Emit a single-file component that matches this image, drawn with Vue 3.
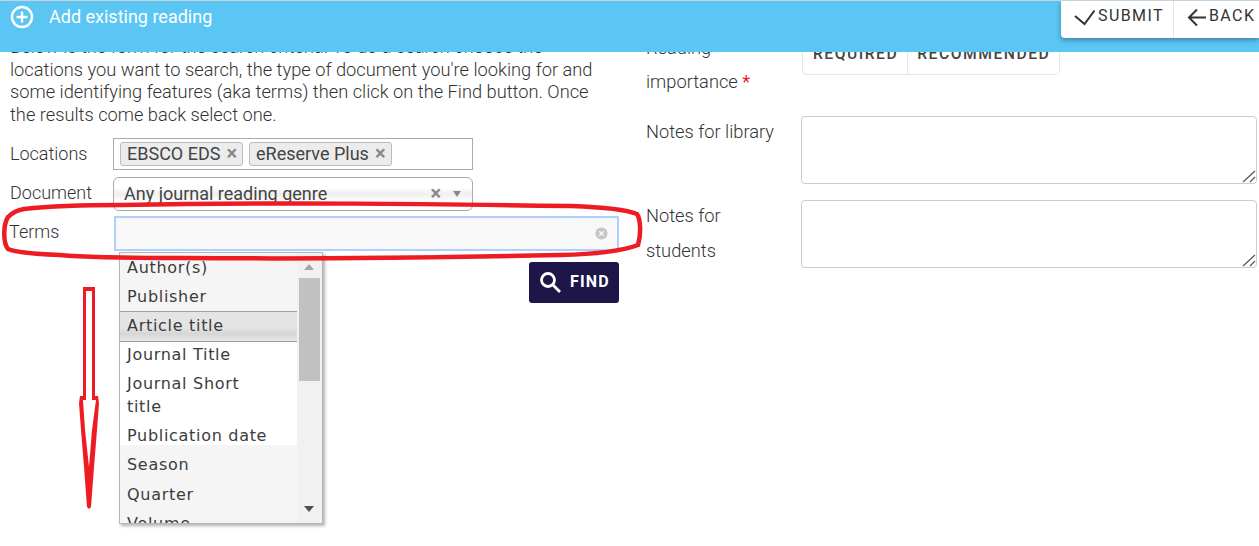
<template>
  <div class="page">
    <header class="topbar">
      <div class="title">
        <svg class="plus" width="24" height="24" viewBox="0 0 24 24" fill="none" stroke="#fff" stroke-width="2.4">
          <circle cx="12" cy="12" r="10" />
          <path d="M12 6.5v11M6.5 12h11" />
        </svg>
        <span>Add existing reading</span>
      </div>
      <div class="actions">
        <button class="action action-submit">
          <svg width="24" height="24" viewBox="0 0 24 24" fill="none" stroke="#333" stroke-width="2">
            <path d="M2 11l9.5 8L21.5 5.5" />
          </svg>
          SUBMIT
        </button>
        <button class="action action-back">
          <svg width="22" height="24" viewBox="0 0 22 24" fill="none" stroke="#333" stroke-width="2">
            <path d="M20 12.5H3M11 4.5l-8 8 8 8" />
          </svg>
          BACK
        </button>
      </div>
    </header>

    <section class="left">
      <p class="intro">
        Below is the form for the search criteria. To do a search choose the locations you want to search, the type of document you're looking for and some identifying features (aka terms) then click on the Find button. Once the results come back select one.
      </p>

      <div class="row row-locations">
        <label>Locations</label>
        <div class="tags">
          <span v-for="tag in tags" :key="tag" class="tag">{{ tag }}<b class="tag-x">×</b></span>
        </div>
      </div>

      <div class="row row-document">
        <label>Document</label>
        <div class="select">
          <span>Any journal reading genre</span>
          <b class="select-x">×</b>
          <i class="caret"></i>
        </div>
      </div>

      <div class="row row-terms">
        <label>Terms</label>
        <div class="terms">
          <input class="terms-input" type="text" />
          <svg class="clear" width="13" height="13" viewBox="0 0 13 13">
            <circle cx="6.5" cy="6.5" r="6" fill="#c4c4c4" />
            <path d="M4.2 4.2l4.6 4.6M8.8 4.2l-4.6 4.6" stroke="#f7f7f7" stroke-width="1.6" />
          </svg>
          <div class="dropdown">
            <div class="options">
              <div
                v-for="opt in options"
                :key="opt.label"
                class="option"
                :class="opt.kind"
              >{{ opt.label }}</div>
            </div>
            <div class="scrollbar">
              <i class="arrow-up"></i>
              <div class="thumb"></div>
              <i class="arrow-down"></i>
            </div>
          </div>
        </div>
      </div>

      <div class="find-row">
        <button class="find">
          <svg width="24" height="24" viewBox="0 0 24 24" fill="none" stroke="#fff" stroke-width="2.8">
            <circle cx="10" cy="10" r="6.5" />
            <path d="M15 15l7 7" />
          </svg>
          FIND
        </button>
      </div>
    </section>

    <section class="right">
      <div class="field field-importance">
        <label>Reading importance <em>*</em></label>
        <div class="toggle">
          <span>REQUIRED</span>
          <span>RECOMMENDED</span>
        </div>
      </div>
      <div class="field field-library">
        <label>Notes for library</label>
        <div class="note">
          <textarea></textarea>
          <svg class="grip" width="14" height="13" viewBox="0 0 14 13" fill="none" stroke="#555" stroke-width="1.2">
            <path d="M1 12L13 1M8 12l5-5" />
          </svg>
        </div>
      </div>
      <div class="field field-students">
        <label>Notes for students</label>
        <div class="note">
          <textarea></textarea>
          <svg class="grip" width="14" height="13" viewBox="0 0 14 13" fill="none" stroke="#555" stroke-width="1.2">
            <path d="M1 12L13 1M8 12l5-5" />
          </svg>
        </div>
      </div>
    </section>

    <svg class="markup" width="1259" height="546" viewBox="0 0 1259 546">
      <path
        fill="none"
        stroke="#ed1c24"
        stroke-width="4.5"
        d="M24 209C60 205 90 205 122 205C280 202 430 204 571 206C600 207 625 209 637 214C641 220 641 235 638 245C625 250 600 254 560 255C430 258 300 259 180 258C120 258 80 257 60 255C35 254 15 252 8 249C3 243 3 225 8 217C12 213 18 210 24 209Z"
      />
      <path
        fill="#ed1c24"
        fill-rule="evenodd"
        d="M83 287H95V396H98L99 403L97 430L94 467L91 507L89 509L87 507L84 467L81 430L79 403L80 396H83ZM86 291V400H83L85 430L89 467L92 430L96 400H92V291Z"
      />
    </svg>
  </div>
</template>

<script setup>
const tags = ['EBSCO EDS', 'eReserve Plus']

const options = [
  { label: 'Author(s)', kind: 'grey' },
  { label: 'Publisher', kind: 'grey' },
  { label: 'Article title', kind: 'active' },
  { label: 'Journal Title', kind: 'plain' },
  { label: 'Journal Short title', kind: 'plain' },
  { label: 'Publication date', kind: 'plain short' },
  { label: 'Season', kind: 'grey after-short' },
  { label: 'Quarter', kind: 'grey' },
  { label: 'Volume', kind: 'grey' }
]
</script>

<style>
html, body {
  margin: 0;
  background: #fff;
  overflow: hidden;
}
</style>

<style scoped>
.page {
  position: relative;
  width: 1259px;
  height: 546px;
  overflow: hidden;
  display: grid;
  grid-template-columns: 646px 613px;
  font-family: Roboto, "Liberation Sans", sans-serif;
  font-size: 18.25px;
  font-weight: 300;
  color: #333;
  border-top: 1px solid #c8d4da;
  box-sizing: border-box;
}

.topbar {
  position: absolute;
  top: 0;
  left: 0;
  right: 0;
  height: 51px;
  background: #5bc5f4;
  display: flex;
  justify-content: space-between;
  align-items: flex-start;
  z-index: 2;
}

.title {
  display: flex;
  align-items: center;
  gap: 15px;
  padding: 4px 0 0 10px;
  color: #fff;
  font-size: 18px;
  font-weight: 400;
}

.title span {
  padding-bottom: 2px;
}

.actions {
  display: flex;
  height: 37px;
  background: #fff;
  border-bottom-left-radius: 4px;
  box-shadow: 0 2px 5px rgba(0, 0, 0, 0.35);
}

.action {
  display: flex;
  align-items: center;
  gap: 1px;
  padding: 0 0 8px 12px;
  border: 0;
  background: none;
  font-family: inherit;
  font-size: 16px;
  font-weight: 400;
  letter-spacing: 1.4px;
  color: #333;
}

.action svg {
  margin-top: 2px;
}

.action-submit {
  width: 113px;
  border-right: 1px solid #e4e4e4;
}

.action-back {
  width: 85px;
}

.left {
  padding: 35px 26px 0 10px;
}

.intro {
  margin: 0;
  max-width: 600px;
  line-height: 22.6px;
  color: #333;
}

.row {
  display: flex;
  font-size: 18px;
}

.row label {
  width: 103px;
  flex: none;
}

.row-locations {
  margin-top: 11.6px;
  line-height: 31px;
}

.tags {
  width: 360px;
  height: 32px;
  box-sizing: border-box;
  border: 1px solid #aaa;
  display: flex;
  gap: 6px;
  padding: 3px 6px;
}

.tag {
  height: 24px;
  line-height: 21px;
  box-sizing: border-box;
  padding: 0 5px 0 6px;
  border: 1px solid #bbb;
  border-radius: 3px;
  background: #ececec;
  font-weight: 400;
  color: #444;
}

.tag-x,
.select-x {
  margin-left: 6px;
  color: #888;
  font-size: 20px;
  font-weight: 700;
}

.row-document {
  margin-top: 7px;
  line-height: 31px;
}

.select {
  position: relative;
  width: 360px;
  height: 34px;
  box-sizing: border-box;
  border: 1px solid #aaa;
  border-radius: 6px;
  padding: 0 10px;
  display: flex;
  align-items: center;
  font-weight: 400;
  color: #444;
  background: linear-gradient(#fff 30%, #efefef 50%, #fff 75%);
}

.select span {
  flex: 1;
}

.select-x {
  margin-right: 12px;
}

.caret {
  width: 0;
  height: 0;
  border: 4px solid transparent;
  border-top: 6px solid #888;
  border-bottom: 0;
  margin-right: 1px;
}

.row-terms {
  margin-top: 5px;
  line-height: 31px;
}

.terms {
  position: relative;
  width: 505px;
  height: 35px;
  margin-left: 1px;
}

.row-terms label {
  width: 103px;
  margin-left: -1px;
  margin-right: 1px;
}

.terms-input {
  display: block;
  width: 100%;
  height: 100%;
  box-sizing: border-box;
  border: 2px solid #add0ff;
  background: #f8f8f8;
  outline: none;
}

.clear {
  position: absolute;
  right: 11px;
  top: 11px;
}

.dropdown {
  position: absolute;
  top: 36px;
  left: 5px;
  width: 204px;
  height: 272px;
  box-sizing: border-box;
  border: 1px solid #b5b5b5;
  background: #f5f5f5;
  box-shadow: 2px 2px 3px rgba(0, 0, 0, 0.3);
  overflow: hidden;
  display: flex;
  z-index: 3;
  font-family: "DejaVu Sans", sans-serif;
  font-weight: 400;
  font-size: 16px;
  letter-spacing: 0.7px;
  color: #3c3c3c;
}

.options {
  width: 177px;
  flex: none;
}

.option {
  padding: 3px 22px 3px 7px;
  line-height: 23px;
}

.option.plain {
  background: #fff;
}

.option.active {
  border-top: 1px solid #a0a0a0;
  border-bottom: 1px solid #a0a0a0;
  padding: 2.5px 22px 3.5px 7px;
  background: linear-gradient(#e4e4e4 55%, #d6d6d6 75%, #e8e8e8);
}

.option.active + .option {
  padding-top: 1px;
}

.option.short {
  height: 21px;
  padding-bottom: 0;
  overflow: hidden;
}

.option.after-short {
  padding-top: 8.5px;
  padding-bottom: 4px;
}

.scrollbar {
  position: relative;
  flex: 1;
  background: #f1f1f1;
}

.thumb {
  position: absolute;
  top: 25px;
  left: 2px;
  width: 21px;
  height: 103px;
  background: #c1c1c1;
}

.arrow-up,
.arrow-down {
  position: absolute;
  left: 7px;
  width: 0;
  height: 0;
  border-left: 5px solid transparent;
  border-right: 5px solid transparent;
}

.arrow-up {
  top: 11px;
  border-bottom: 6px solid #a6a6a6;
}

.arrow-down {
  bottom: 11px;
  border-top: 6px solid #505050;
}

.find-row {
  display: flex;
  justify-content: flex-end;
  margin-top: 11px;
}

.find {
  width: 90px;
  height: 41px;
  margin-right: 1px;
  display: flex;
  align-items: center;
  gap: 8px;
  padding: 0 0 2px 9px;
  border: 0;
  border-radius: 3px;
  background: #1e1548;
  color: #fff;
  font-family: inherit;
  font-size: 16px;
  font-weight: 700;
  letter-spacing: 1.2px;
}

.find svg {
  margin-top: 2px;
}

.right {
  padding: 30px 2px 0 0;
}

.field {
  display: flex;
  align-items: flex-start;
}

.field label {
  width: 155px;
  flex: none;
  line-height: 34px;
}

.field label em {
  font-style: normal;
  color: #f01c1c;
  font-weight: 400;
}

.note {
  position: relative;
}

.note textarea {
  display: block;
  width: 456px;
  height: 68px;
  box-sizing: border-box;
  border: 1px solid #ccc;
  border-radius: 4px;
  outline: none;
  resize: none;
}

.grip {
  position: absolute;
  right: 1px;
  bottom: 1px;
}

.field-importance {
  height: 85px;
}

.field-importance label {
  width: 120px;
  margin-right: 36px;
}

.toggle {
  display: flex;
  align-self: flex-start;
  height: 44px;
  box-sizing: border-box;
  border: 1px solid #e6e6e6;
  border-radius: 5px;
  align-items: center;
  font-weight: 500;
  font-size: 15.7px;
  letter-spacing: 1.5px;
  color: #444;
}

.toggle span {
  padding: 0 9px 0 10px;
  line-height: 44px;
  height: 42px;
}

.toggle span + span {
  padding: 0 9px;
  border-left: 1px solid #e6e6e6;
}

.field-library label {
  margin-top: -1px;
}

.field-students {
  margin-top: 16px;
}

.field-students label {
  width: 120px;
  margin-top: -2px;
  margin-right: 35px;
  line-height: 35px;
}

.markup {
  position: absolute;
  top: -1px;
  left: 0;
  z-index: 4;
  pointer-events: none;
}
</style>
